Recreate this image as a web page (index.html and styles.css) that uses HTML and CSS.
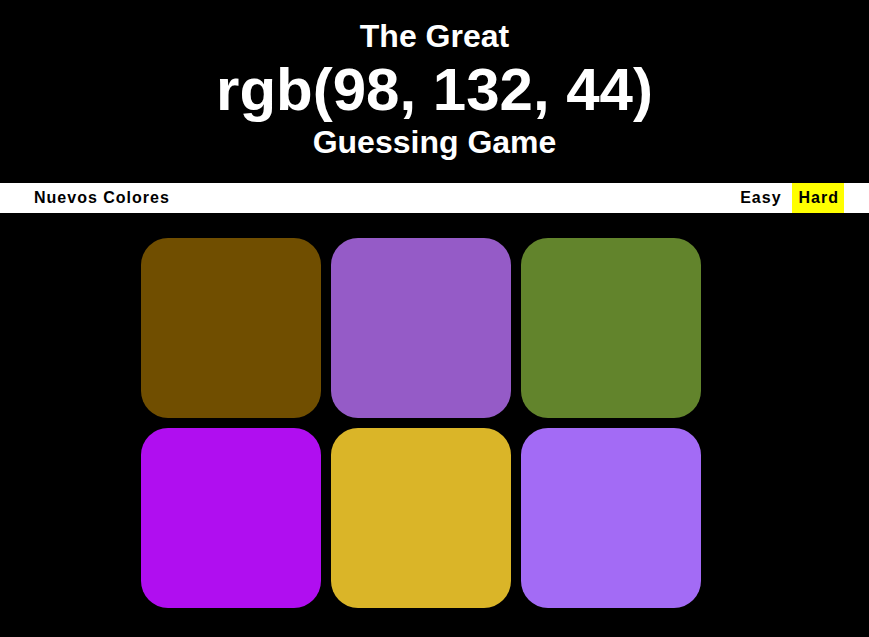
FILE: index.html
```html
<!DOCTYPE html>
<html lang="es">
<head>
<meta charset="utf-8">
<title>Colour Game</title>
<link rel="stylesheet" href="styles.css">
</head>
<body>
<h1 class="title">
  <span class="title-small">The Great</span>
  <span class="title-rgb">rgb(98, 132, 44)</span>
  <span class="title-small">Guessing Game</span>
</h1>
<nav class="stripe">
  <button class="btn">Nuevos Colores</button>
  <span class="spacer"></span>
  <button class="btn mode">Easy</button>
  <button class="btn mode selected">Hard</button>
</nav>
<main class="board">
  <div class="square" style="background: rgb(112, 78, 0)"></div>
  <div class="square" style="background: rgb(149, 91, 199)"></div>
  <div class="square" style="background: rgb(98, 132, 44)"></div>
  <div class="square" style="background: rgb(176, 14, 240)"></div>
  <div class="square" style="background: rgb(218, 181, 40)"></div>
  <div class="square" style="background: rgb(163, 107, 245)"></div>
</main>
</body>
</html>
```
FILE: styles.css
```css
* { box-sizing: border-box; }
html, body { margin: 0; padding: 0; }
body {
  background: #000;
  font-family: "Liberation Sans", Arial, sans-serif;
  color: #fff;
}
.title {
  margin: 0;
  padding: 18px 0 22px;
  text-align: center;
  font-weight: bold;
  font-size: 32px;
}
.title-small {
  display: block;
  font-size: 32px;
  line-height: 37px;
}
.title-rgb {
  display: block;
  font-size: 60px;
  line-height: 69px;
}
.stripe {
  display: flex;
  align-items: stretch;
  height: 30px;
  background: #fff;
  padding: 0 25px 0 28px;
}
.spacer { flex: 1; }
.btn {
  border: none;
  background: none;
  margin: 0;
  padding: 0 6px 1px;
  font-family: "Liberation Sans", Arial, sans-serif;
  font-size: 16px;
  font-weight: bold;
  letter-spacing: 1px;
  line-height: 29px;
  color: #000;
}
.mode { margin-left: 4px; }
.selected {
  background: #ff0;
  padding-left: 7px;
  padding-right: 5px;
}
.board {
  display: grid;
  grid-template-columns: repeat(3, 180px);
  grid-auto-rows: 180px;
  gap: 10px;
  padding: 25px 0 0 141px;
}
.square {
  border-radius: 27px;
}
```
